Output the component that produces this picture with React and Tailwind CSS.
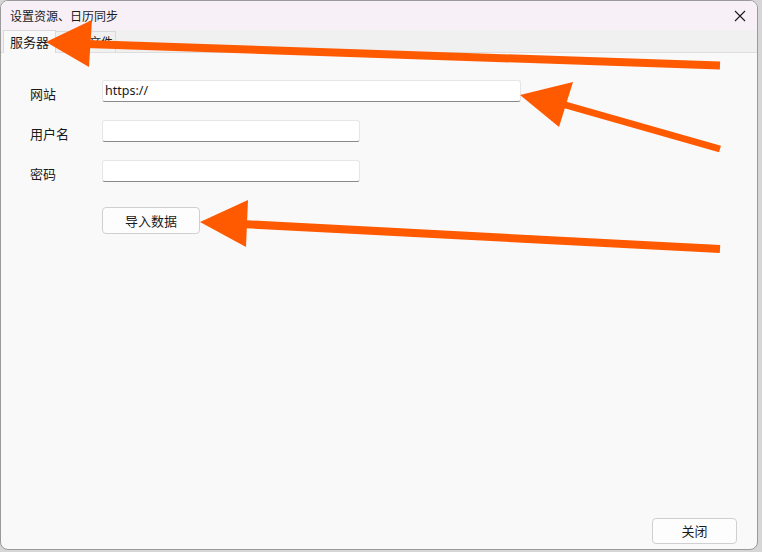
import React from "react";

const cjk = { fontFamily: '"Noto Sans CJK SC", "Noto Sans", sans-serif' };

function Field({ label, wide, value }) {
  return (
    <div className="flex items-start">
      <div className="w-[72px] pt-[6px] pl-[29px] box-content text-[13px] leading-[16px] text-[#1a1a1a]" style={cjk}>
        {label}
      </div>
      <div
        className={`${wide ? "w-[419px]" : "w-[258px]"} h-[22px] bg-white border border-[#e6e6e6] border-b-[#8a8a8a] rounded-[3px] px-[2px] flex items-center text-[12.5px] text-[#1a1a1a]`}
        style={{ fontFamily: '"Noto Sans", "Open Sans", sans-serif' }}
      >
        {value}
      </div>
    </div>
  );
}

function Arrows() {
  const c = "#ff5a00";
  return (
    <svg className="absolute inset-0 pointer-events-none" width="762" height="552" viewBox="0 0 762 552">
      <line x1="86" y1="44" x2="720" y2="65.5" stroke={c} strokeWidth="8" />
      <polygon points="46,42 92,20 89,67" fill={c} />
      <line x1="562" y1="104" x2="720" y2="149" stroke={c} strokeWidth="7" />
      <polygon points="520,95 573,82 559,127" fill={c} />
      <line x1="242" y1="224" x2="720" y2="249" stroke={c} strokeWidth="8" />
      <polygon points="200,222 248,200 246,247" fill={c} />
    </svg>
  );
}

export default function App() {
  return (
    <div className="relative w-[762px] h-[552px] bg-[#d6d6d6] overflow-hidden">
      <div className="w-[758px] h-[550px] flex flex-col rounded-[8px] border border-[#9a9a9a] bg-[#f9f9f9] overflow-hidden">
        {/* title bar */}
        <div className="h-[29px] shrink-0 bg-[#f7f0f7] flex items-center justify-between pl-[9px] pr-[8px]">
          <span className="text-[12px] text-[#1a1a1a]" style={cjk}>设置资源、日历同步</span>
          <svg width="12" height="12" viewBox="0 0 12 12" className="mr-[3px]">
            <path d="M1 1 L11 11 M11 1 L1 11" stroke="#1a1a1a" strokeWidth="1.1" />
          </svg>
        </div>
        {/* tab strip */}
        <div className="h-[23px] shrink-0 bg-[#f0f0f0] flex items-end pl-[2px] border-b border-[#dedede]">
          <div className="h-[23px] px-[6px] bg-[#f9f9f9] border border-b-0 border-[#d9d9d9] flex items-center text-[13px] text-[#1a1a1a] -mb-px" style={cjk}>
            服务器
          </div>
          <div className="h-[21px] w-[60px] pl-[33px] bg-[#f0f0f0] border border-l-0 border-b-0 border-[#d9d9d9] flex items-center text-[12px] text-[#1a1a1a]" style={cjk}>
            文件
          </div>
        </div>
        {/* form */}
        <div className="flex-1 flex flex-col pt-[27px]">
          <div className="flex flex-col gap-[18px]">
            <Field label="网站" wide value="https://" />
            <Field label="用户名" />
            <Field label="密码" />
          </div>
          <div className="pl-[101px] pt-[25px]">
            <button className="w-[98px] h-[27px] bg-[#fdfdfd] border border-[#d0d0d0] rounded-[4px] text-[13px] text-[#1a1a1a]" style={cjk}>
              导入数据
            </button>
          </div>
          <div className="mt-auto flex justify-end pr-[20px] pb-[5px]">
            <button className="w-[85px] h-[26px] bg-[#fdfdfd] border border-[#d0d0d0] rounded-[4px] text-[13px] text-[#1a1a1a]" style={cjk}>
              关闭
            </button>
          </div>
        </div>
      </div>
      <Arrows />
    </div>
  );
}
